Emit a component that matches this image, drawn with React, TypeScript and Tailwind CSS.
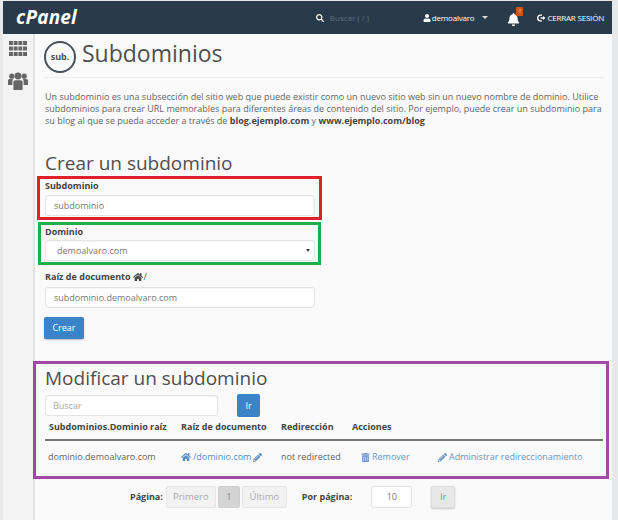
import React from 'react';
import { FaHome, FaPencilAlt, FaTrashAlt, FaSearch, FaUser, FaBell } from 'react-icons/fa';

const Field: React.FC<{ value: string; className?: string }> = ({ value, className }) => (
  <div className={`flex h-[21px] items-center rounded-[3px] border border-[#e4e4e4] bg-white text-[9px] text-[#777] shadow-[inset_0_1px_1px_rgba(0,0,0,0.04)] ${className ?? ''}`}>
    {value}
  </div>
);

const PageButton: React.FC<{ label: string; className: string }> = ({ label, className }) => (
  <span className={`flex h-[22px] items-center justify-center rounded-[2px] border text-[9.5px] font-normal ${className}`}>
    {label}
  </span>
);

// 4 x 3 tile icon of the sidebar
const GridIcon = () => (
  <svg width="18" height="15" viewBox="0 0 18 15" fill="#666">
    {[0, 5.5, 11].map((y) =>
      [0, 4.7, 9.4, 14.1].map((x) => <rect key={`${x}-${y}`} x={x} y={y} width="3.9" height="4" />)
    )}
  </svg>
);

const GroupIcon = () => (
  <svg width="20" height="18" viewBox="0 0 20 18" fill="#666">
    <circle cx="3.8" cy="4.2" r="2.6" />
    <circle cx="16.2" cy="4.2" r="2.6" />
    <circle cx="10" cy="4" r="3.4" />
    <path d="M0 8.5q0-1.6 1.8-1.6h3.2q-.6 1-.6 2.4v3.6h-4.4z" />
    <path d="M20 8.5q0-1.6-1.8-1.6h-3.2q.6 1 .6 2.4v3.6h4.4z" />
    <path d="M5.4 10q0-1.8 2-1.8h5.2q2 0 2 1.8v8h-9.2z" />
  </svg>
);

const LogoutIcon = () => (
  <svg width="9" height="8" viewBox="0 0 9 8" fill="none" stroke="#fff" strokeWidth="1.4">
    <path d="M5 1.1H3.6a2.9 2.9 0 0 0 0 5.8H5" />
    <path d="M3.5 4h4" />
    <path d="M6 2l2.3 2L6 6z" fill="#fff" stroke="none" />
  </svg>
);

const App: React.FC = () => {
  return (
    <div className="h-[520px] w-[618px] overflow-hidden bg-[#e6e8ea] pl-[3px] pr-[6px] pt-px font-['Open_Sans',sans-serif] text-[#555]">
      <header className="flex h-[33px] items-center bg-[#293a4a] text-white">
        <span className="ml-[13px] text-[19px] font-bold italic leading-none tracking-[0.2px]">cPanel</span>
        <div className="ml-auto flex items-center">
          <FaSearch className="h-[8px] w-[8px] text-white" />
          <span className="ml-[6px] w-[93px] text-[8px] text-[#5f6f7e]">Buscar ( / )</span>
          <FaUser className="h-[8px] w-[8px] text-white" />
          <span className="ml-[1px] text-[8px] tracking-[-0.2px] text-white">demoalvaro</span>
          <span className="ml-[8px] h-0 w-0 border-x-[3px] border-t-[3px] border-x-transparent border-t-[#ddd]" />
          <div className="relative ml-[19px] h-[14px] w-[13px]">
            <FaBell className="mt-[2px] h-[13px] w-[13px] text-white" />
            <span className="absolute -right-[3px] -top-[4px] h-[9px] w-[7px] rounded-[1px] bg-[#c9541f] text-center text-[6px] leading-[9px] text-white">!</span>
          </div>
          <span className="ml-[17px]"><LogoutIcon /></span>
          <span className="ml-[1px] mr-[8px] text-[8px] tracking-[-0.2px] text-white">CERRAR SESIÓN</span>
        </div>
      </header>

      <div className="flex h-[486px]">
        <aside className="flex w-[32px] shrink-0 flex-col items-center gap-[16px] border-r-2 border-[#e2e2e2] bg-[#f3f3f3] pt-[7px]">
          <GridIcon />
          <GroupIcon />
        </aside>

        <main className="flex-1 bg-[#fafafa] pl-[2px] pr-[3px]">
          <div className="ml-[7px] mr-[5px] flex h-[44px] items-center gap-[6px] border-b border-[#eee] pt-[3px]">
            <span className="flex h-[32px] w-[32px] items-center justify-center rounded-full border-2 border-[#4b5158] text-[9px] font-bold text-[#4b5158]">sub.</span>
            <h1 className="pb-[7px] text-[23px] leading-none text-[#4f4f4f]">Subdominios</h1>
          </div>

          <p className="ml-[8px] mt-[13px] w-[560px] text-[9px] leading-[12px] text-[#666]">
            Un subdominio es una subsección del sitio web que puede existir como un nuevo sitio web sin un nuevo nombre de dominio. Utilice subdominios para crear URL memorables para diferentes áreas de contenido del sitio. Por ejemplo, puede crear un subdominio para su blog al que se pueda acceder a través de <b className="text-[#444]">blog.ejemplo.com</b> y <b className="text-[#444]">www.ejemplo.com/blog</b>
          </p>

          <h2 className="ml-[8px] mt-[24px] text-[19px] leading-[24px] text-[#4f4f4f]">Crear un subdominio</h2>

          <div className="mt-[1px] h-[44px] w-[285px] border-[3px] border-[#e0212c] pl-[5px] pt-px">
            <div className="text-[9px] font-bold leading-[11px] text-[#444]">Subdominio</div>
            <Field value="subdominio" className="mt-[4px] w-[270px] pl-[8px]" />
          </div>

          <div className="ml-px mt-[2px] h-[43px] w-[283px] border-[3px] border-[#22ad4b] pl-[4px] pt-px">
            <div className="text-[9px] font-bold leading-[11px] text-[#444]">Dominio</div>
            <div className="relative mt-[3px] w-[270px]">
              <Field value="demoalvaro.com" className="pl-[11px]" />
              <span className="absolute right-[5px] top-[9px] h-0 w-0 border-x-[2px] border-t-[3px] border-x-transparent border-t-[#444]" />
            </div>
          </div>

          <div className="ml-[8px] mt-[6px] flex h-[12px] items-center gap-[2px] text-[9px] font-bold text-[#444]">
            Raíz de documento <FaHome className="h-[10px] w-[10px]" /><span className="-ml-[1px] font-normal">/</span>
          </div>
          <Field value="subdominio.demoalvaro.com" className="ml-[8px] mt-[4px] w-[270px] pl-[8px]" />
          <button className="ml-[7px] mt-[9px] block h-[22px] w-[40px] rounded-[2px] bg-[#3a83c9] text-[9px] text-white shadow-[0_1px_2px_rgba(0,0,0,0.25)]">Crear</button>

          <section className="-ml-[4px] mt-[22px] h-[118px] w-[576px] border-[3px] border-[#a04aa8]">
            <h2 className="ml-[9px] mt-[2px] text-[19px] leading-[24px] text-[#4f4f4f]">Modificar un subdominio</h2>
            <div className="ml-[9px] mt-[4px] flex items-center gap-[19px]">
              <Field value="Buscar" className="w-[173px] pl-[7px] !text-[#aaa]" />
              <button className="h-[23px] w-[23px] rounded-[2px] bg-[#3a83c9] text-[9px] text-white">Ir</button>
            </div>
            <div className="ml-[9px] mr-[3px] flex h-[24px] items-center border-b-2 border-[#777] pb-[3px] pl-[4px] text-[9px] font-bold text-[#444]">
              <span className="w-[132px]">Subdominios.Dominio raíz</span>
              <span className="w-[100px]">Raíz de documento</span>
              <span className="w-[71px]">Redirección</span>
              <span>Acciones</span>
            </div>
            <div className="ml-[12px] mt-[9px] flex h-[14px] items-center text-[9px] text-[#666]">
              <span className="w-[133px]">dominio.demoalvaro.com</span>
              <span className="flex w-[100px] items-center gap-[2px] text-[#5b8ec4]">
                <FaHome className="h-[10px] w-[10px]" />/dominio.com<FaPencilAlt className="h-[9px] w-[9px]" />
              </span>
              <span className="w-[80px]">not redirected</span>
              <span className="flex w-[77px] items-center gap-[2px] text-[#6d96c4]">
                <FaTrashAlt className="h-[9px] w-[9px]" />Remover
              </span>
              <span className="flex items-center gap-[2px] text-[#6d96c4]">
                <FaPencilAlt className="h-[9px] w-[9px]" />Administrar redireccionamiento
              </span>
            </div>
          </section>

          <div className="ml-[93px] mt-[7px] flex items-center text-[9px] font-bold text-[#444]">
            <span className="mr-[3px]">Página:</span>
            <PageButton label="Primero" className="w-[50px] border-[#e6e6e6] bg-[#f2f2f2] text-[#aaa]" />
            <PageButton label="1" className="ml-[2px] w-[22px] border-[#d0d0d0] bg-[#d4d4d4] text-[#888]" />
            <PageButton label="Último" className="ml-[2px] w-[45px] border-[#e6e6e6] bg-[#f2f2f2] text-[#aaa]" />
            <span className="ml-[15px]">Por página:</span>
            <span className="ml-[19px] flex h-[22px] w-[41px] items-center justify-center rounded-[3px] border border-[#e4e4e4] bg-white font-normal text-[#777]">10</span>
            <span className="ml-[19px] flex h-[22px] w-[24px] items-center justify-center rounded-[2px] border border-[#ddd] bg-[#e8e8e8] font-normal text-[#888] shadow-[0_1px_2px_rgba(0,0,0,0.2)]">Ir</span>
          </div>
        </main>
      </div>
    </div>
  );
};

export default App;
